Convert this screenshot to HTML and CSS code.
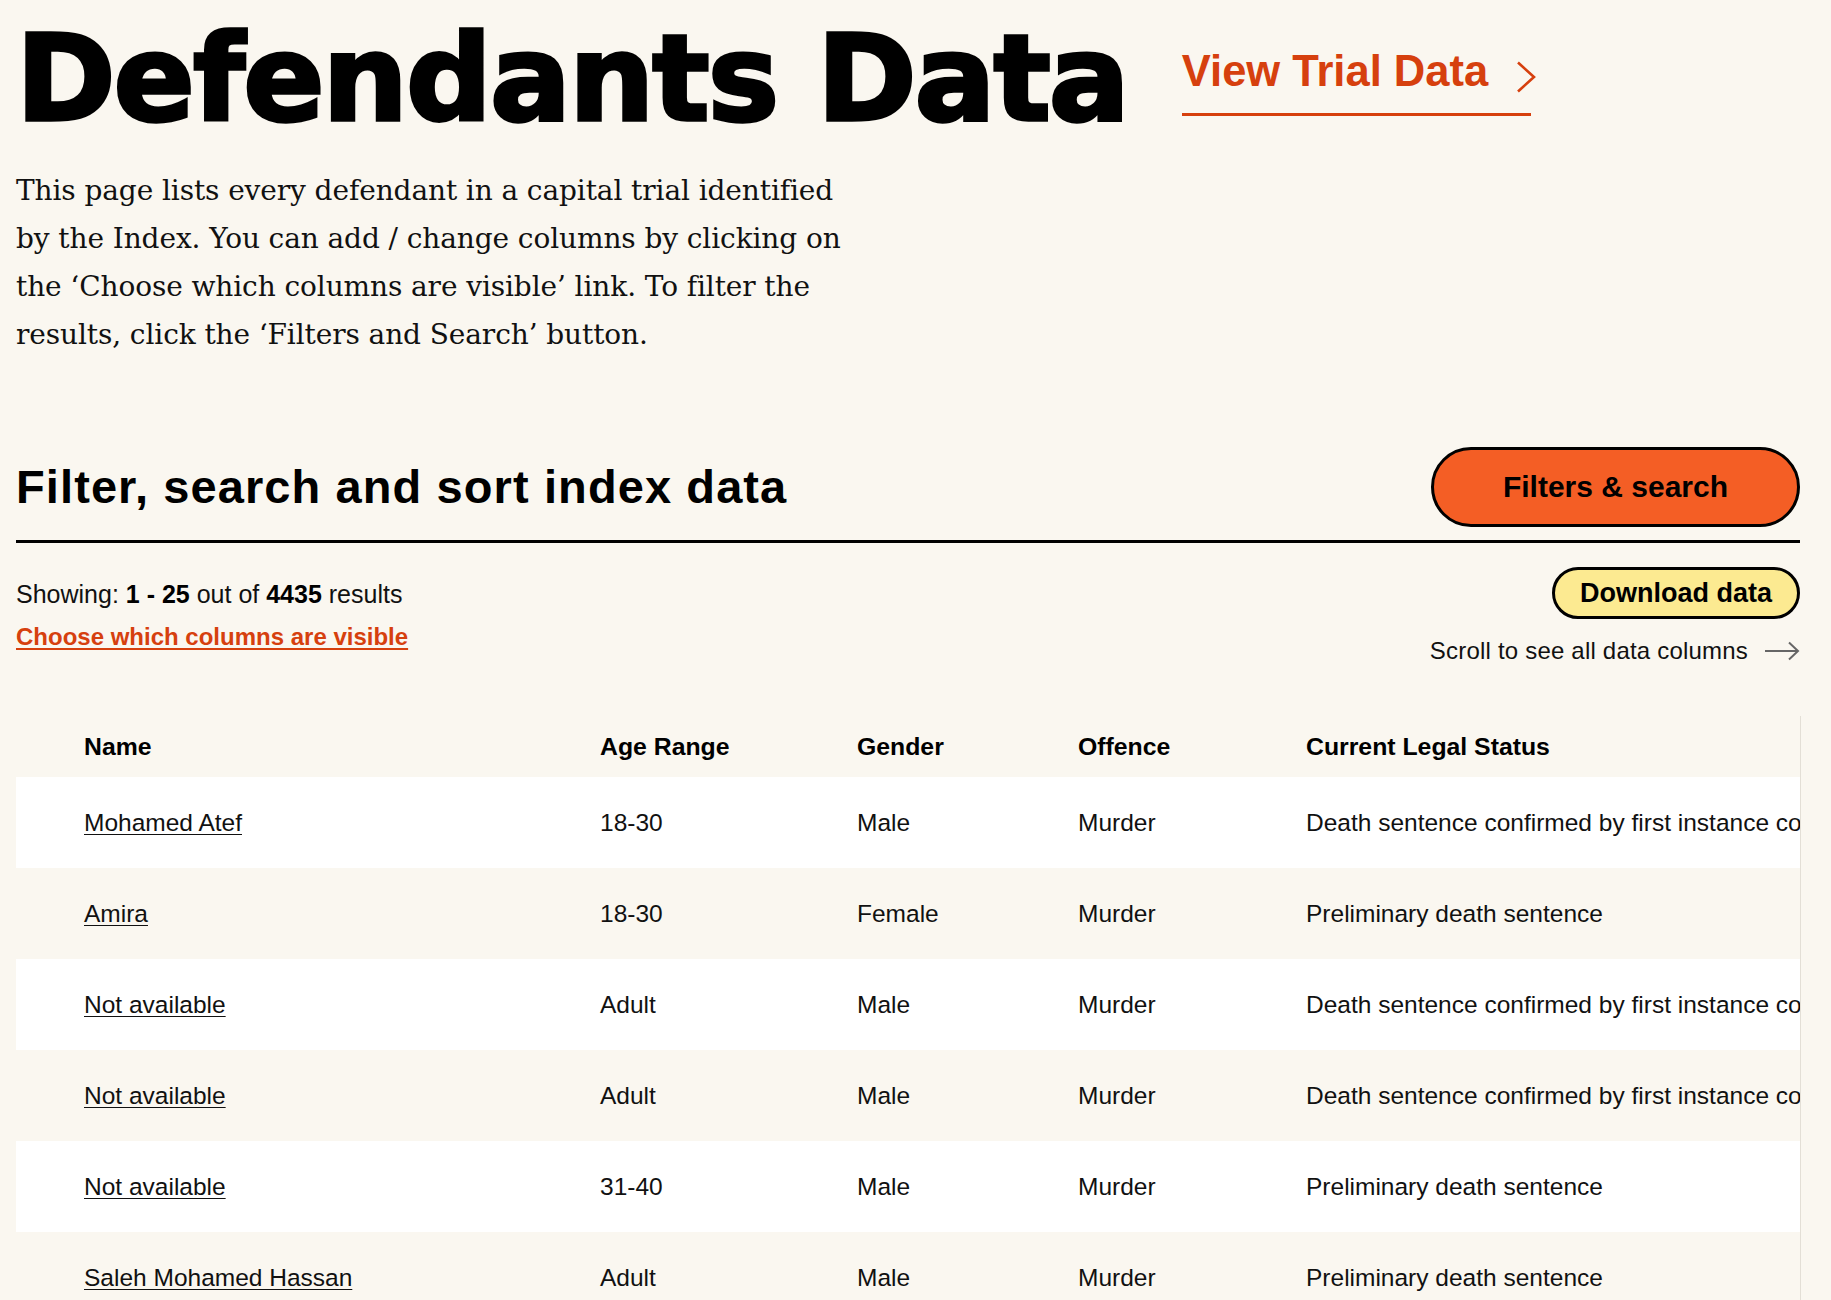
FILE: index.html
```html
<!DOCTYPE html>
<html lang="en">
<head>
<meta charset="utf-8">
<title>Defendants Data</title>
<link rel="stylesheet" href="styles.css">
</head>
<body>
<div class="page">
  <header class="hero">
    <div class="title-row">
      <h1 class="title">Defendants Data</h1>
      <a class="trial-link" href="#">View Trial Data
        <svg class="chevron" width="20" height="32" viewBox="0 0 20 32"><polyline points="2,1.5 18,16 2,30.5" fill="none" stroke="currentColor" stroke-width="2.6"/></svg>
      </a>
    </div>
    <p class="intro">This page lists every defendant in a capital trial identified by the Index. You can add / change columns by clicking on the ‘Choose which columns are visible’ link. To filter the results, click the ‘Filters and Search’ button.</p>
  </header>

  <section class="data">
    <div class="section-head">
      <h2 class="section-title">Filter, search and sort index data</h2>
      <button class="btn btn-filters" type="button">Filters &amp; search</button>
    </div>

    <div class="toolbar">
      <div class="toolbar-left">
        <p class="showing">Showing: <b>1 - 25</b> out of <b>4435</b> results</p>
        <a class="cols-link" href="#">Choose which columns are visible</a>
      </div>
      <div class="toolbar-right">
        <button class="btn btn-download" type="button">Download data</button>
        <div class="scroll-hint">Scroll to see all data columns
          <svg class="arrow" width="36" height="20" viewBox="0 0 36 20"><line x1="1" y1="10" x2="34" y2="10" stroke="#666" stroke-width="2"/><polyline points="25,1.5 34,10 25,18.5" fill="none" stroke="#666" stroke-width="2"/></svg>
        </div>
      </div>
    </div>

    <div class="table-wrap">
      <table class="data-table">
        <colgroup>
          <col class="c-name"><col class="c-age"><col class="c-gender"><col class="c-offence"><col class="c-status"><col class="c-trial">
        </colgroup>
        <thead>
          <tr><th>Name</th><th>Age Range</th><th>Gender</th><th>Offence</th><th>Current Legal Status</th><th>Trial</th></tr>
        </thead>
        <tbody>
          <tr><td><a href="#">Mohamed Atef</a></td><td>18-30</td><td>Male</td><td>Murder</td><td>Death sentence confirmed by first instance court</td><td>Case 1</td></tr>
          <tr><td><a href="#">Amira</a></td><td>18-30</td><td>Female</td><td>Murder</td><td>Preliminary death sentence</td><td>Case 2</td></tr>
          <tr><td><a href="#">Not available</a></td><td>Adult</td><td>Male</td><td>Murder</td><td>Death sentence confirmed by first instance court</td><td>Case 3</td></tr>
          <tr><td><a href="#">Not available</a></td><td>Adult</td><td>Male</td><td>Murder</td><td>Death sentence confirmed by first instance court</td><td>Case 3</td></tr>
          <tr><td><a href="#">Not available</a></td><td>31-40</td><td>Male</td><td>Murder</td><td>Preliminary death sentence</td><td>Case 4</td></tr>
          <tr><td><a href="#">Saleh Mohamed Hassan</a></td><td>Adult</td><td>Male</td><td>Murder</td><td>Preliminary death sentence</td><td>Case 5</td></tr>
          <tr><td><a href="#">Not available</a></td><td>Adult</td><td>Male</td><td>Murder</td><td>Preliminary death sentence</td><td>Case 5</td></tr>
          <tr><td><a href="#">Not available</a></td><td>Adult</td><td>Male</td><td>Murder</td><td>Preliminary death sentence</td><td>Case 5</td></tr>
        </tbody>
      </table>
    </div>
  </section>
</div>
</body>
</html>
```

FILE: styles.css
```css
* { box-sizing: border-box; }

html, body {
  margin: 0;
  padding: 0;
  background: #faf7f0;
  color: #000;
  font-family: "Liberation Sans", Arial, sans-serif;
}

.page {
  width: 1801px;
  padding: 19px 0 0 16px;
}

/* ---------- hero ---------- */
.title-row {
  display: flex;
  align-items: flex-start;
  gap: 54px;
}

.title {
  margin: 0;
  font-family: "DejaVu Sans", sans-serif;
  font-weight: 700;
  font-size: 120px;
  line-height: 120px;
  letter-spacing: -2px;
  -webkit-text-stroke: 3.4px #000;
  white-space: nowrap;
}

.trial-link {
  display: inline-flex;
  align-items: flex-start;
  margin-top: 27px;
  padding-bottom: 16px;
  border-bottom: 3px solid #d6400e;
  color: #d6400e;
  text-decoration: none;
  font-weight: 700;
  font-size: 43.5px;
  line-height: 51px;
  white-space: nowrap;
}

.chevron {
  margin: 15px -5px 0 28px;
  flex: none;
}

.intro {
  margin: 28px 0 0;
  width: 850px;
  font-family: "DejaVu Serif", serif;
  font-size: 28px;
  line-height: 48px;
  letter-spacing: -0.1px;
  color: #111;
}

/* ---------- section ---------- */
.data {
  margin-top: 88px;
  width: 1785px;
}

.section-head {
  display: flex;
  align-items: center;
  justify-content: space-between;
  padding-bottom: 13px;
  border-bottom: 3px solid #000;
  width: 1784px;
}

.section-title {
  margin: 0;
  font-size: 47px;
  line-height: 54px;
  font-weight: 700;
  letter-spacing: 1.1px;
}

.btn {
  font-family: "Liberation Sans", Arial, sans-serif;
  font-weight: 700;
  color: #000;
  border: 3px solid #000;
  border-radius: 999px;
  cursor: pointer;
  white-space: nowrap;
}

.btn-filters {
  height: 80px;
  width: 369px;
  background: #f45e25;
  font-size: 30px;
  padding: 0;
}

.toolbar {
  display: flex;
  justify-content: space-between;
  align-items: flex-start;
  padding-top: 24px;
  width: 1784px;
}

.toolbar-left {
  padding-top: 12px;
  display: flex;
  flex-direction: column;
  align-items: flex-start;
}

.showing {
  margin: 0;
  font-size: 25px;
  line-height: 30px;
  color: #111;
}

.showing b { font-weight: 700; color: #000; }

.cols-link {
  margin-top: 13px;
  font-size: 24px;
  line-height: 30px;
  font-weight: 700;
  color: #d6400e;
  text-decoration: underline;
  text-decoration-thickness: 2px;
  text-underline-offset: 3px;
}

.toolbar-right {
  display: flex;
  flex-direction: column;
  align-items: flex-end;
}

.btn-download {
  height: 52px;
  width: 248px;
  padding: 0;
  background: #fcea91;
  font-size: 27px;
}

.scroll-hint {
  margin-top: 17px;
  display: flex;
  align-items: center;
  gap: 16px;
  font-size: 24px;
  line-height: 30px;
  letter-spacing: 0.2px;
  color: #111;
}

.arrow { flex: none; }

/* ---------- table ---------- */
.table-wrap {
  margin-top: 50px;
  width: 1785px;
  overflow: hidden;
  border-right: 1px solid #e3dfd6;
}

.data-table {
  border-collapse: collapse;
  table-layout: fixed;
  width: 2700px;
  font-size: 24.5px;
  line-height: 28px;
  color: #111;
}

.c-name { width: 584px; }
.c-age { width: 257px; }
.c-gender { width: 221px; }
.c-offence { width: 228px; }
.c-status { width: 760px; }
.c-trial { width: 650px; }

.data-table th,
.data-table td {
  padding: 0;
  text-align: left;
  white-space: nowrap;
  vertical-align: middle;
}

.data-table th:first-child,
.data-table td:first-child { padding-left: 68px; }

.data-table thead tr { height: 61px; }
.data-table th { font-weight: 700; color: #000; font-size: 24.8px; }

.data-table tbody tr { height: 91px; }
.data-table tbody tr:nth-child(odd) { background: #ffffff; }
.data-table tbody tr:nth-child(even) { background: #faf7f0; }

.data-table td a {
  color: #111;
  text-decoration: underline;
  text-decoration-thickness: 1px;
  text-underline-offset: 3px;
}
```
